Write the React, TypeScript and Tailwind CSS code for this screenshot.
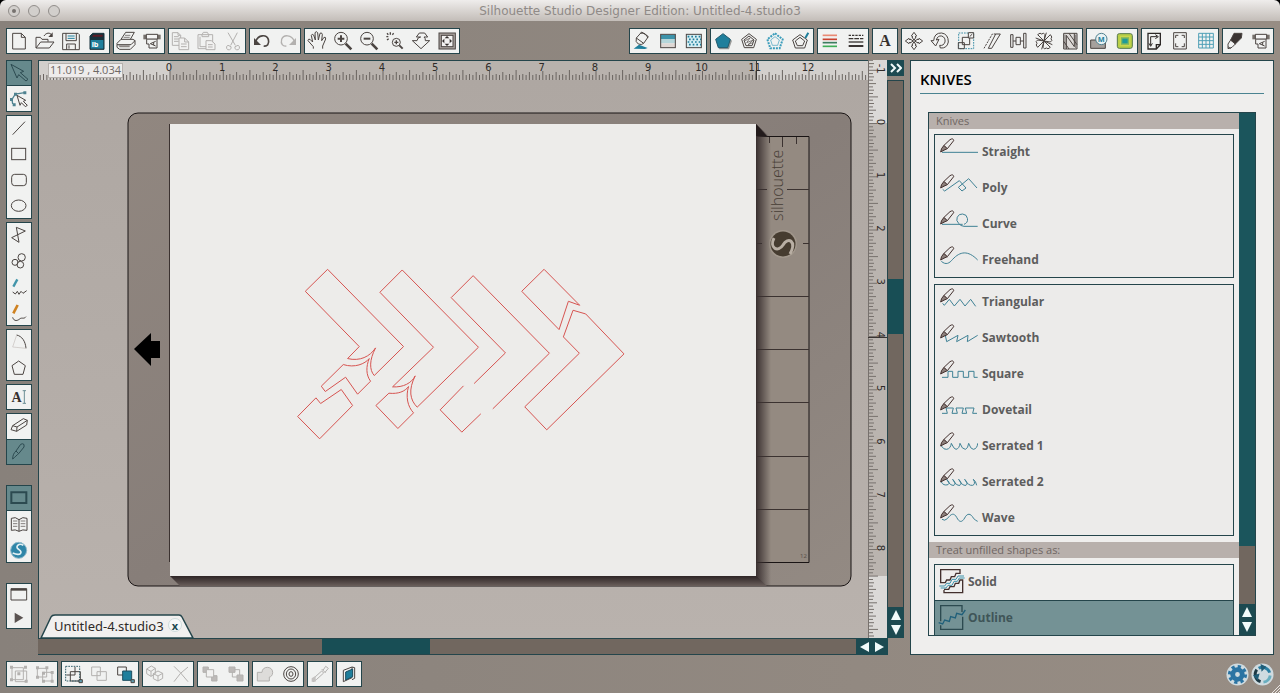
import { useState, type ReactNode } from "react";

const INK = "#4b4542";
const DIM = "#b3b1af";
const TEAL = "#1f7f9c";

// Every tool icon is drawn on a 78 x 78 grid
const icons: Record<string, ReactNode> = {
  novo: <path d="M20 16H46L58 28V63H20ZM46 16V28H58" />,
  open: (
    <>
      <path d="M12 60V28H25L30 34H48V41M12 60L26 42H66L52 60ZM36 24C42 14 54 12 60 22" />
      <path d="M62 13V27H49Z" fill={INK} stroke="none" />
    </>
  ),
  save: (
    <>
      <path d="M14 16H60L64 20V65H14ZM24 16V38H55V16M26 65V48H52V65M33 52V62" />
      <path d="M29 24H50M29 31H50" stroke={TEAL} />
    </>
  ),
  card: (
    <>
      <path d="M26 16H60V64H18V24Z" fill="#17333d" stroke="#17333d" />
      <path d="M20 36H58V62H20Z" fill={TEAL} stroke="none" />
      <path d="M28 20H56V26H24Z" fill="#5c1c26" stroke="none" />
      <text x="23" y="57" fontSize="22" fontWeight="700" fill="#fff" stroke="none">lb</text>
    </>
  ),
  print: (
    <>
      <path d="M24 34L38 13H64L52 34M12 46L24 34H60L66 38L54 50H12ZM12 50V58L20 64H52L66 50V38" />
      <path d="M36 22H52M32 28H50" strokeWidth="2" />
      <path d="M16 52H50V58H20Z" fill="#8b8683" stroke="none" />
    </>
  ),
  cutter: (
    <>
      <path d="M13 20H65V34H13Z" fill="#77716d" stroke="none" />
      <path d="M22 19H56V33H22Z" fill="#f4f4f4" />
      <path d="M23 34V48H30V60H54V34M50 40L34 47L50 54M44 43V51" />
    </>
  ),
  copy: (
    <>
      <path d="M13 14H30L38 22V52H13ZM30 14V22H38M18 26H32M18 33H32M18 40H32" />
      <path d="M33 30H50L62 42V65H33Z" fill="#f2f2f1" />
      <path d="M50 30V42H62M39 48H56M39 56H56" />
    </>
  ),
  paste: (
    <>
      <path d="M12 20H56V62H12ZM24 20L28 13H40L44 20V26H24ZM18 26V56H36" />
      <path d="M36 38H52L63 48V65H36Z" fill="#f2f2f1" />
      <path d="M42 50H56M42 57H56" />
    </>
  ),
  scissors: <path d="M24 14L46 52M52 14L32 52M24 52a7 7 0 1 0 9 4ZM54 52a7 7 0 1 1 -9 4Z" />,
  undo: (
    <>
      <path d="M20 40C28 20 52 18 58 34C62 48 54 56 44 54" strokeWidth="5" />
      <path d="M15 30V51H36Z" fill={INK} stroke="none" />
    </>
  ),
  redo: (
    <>
      <path d="M58 40C50 20 26 18 20 34C16 48 24 56 34 54" strokeWidth="4" />
      <path d="M63 30V51H42Z" fill={DIM} stroke="none" />
    </>
  ),
  hand: <path d="M28 62V56L12 38Q12 32 18 34L26 42L22 22Q24 16 29 21L34 36L33 14Q37 8 41 14L43 36L48 16Q53 12 55 19L53 38L60 28Q66 26 65 33L56 54V62" />,
  zoomIn: (
    <>
      <circle cx="33" cy="32" r="19" />
      <path d="M23 32H43M33 22V42" strokeWidth="6" />
      <path d="M47 47L64 64" strokeWidth="8" />
    </>
  ),
  zoomOut: (
    <>
      <circle cx="33" cy="32" r="19" />
      <path d="M23 32H43" strokeWidth="6" />
      <path d="M47 47L64 64" strokeWidth="8" />
    </>
  ),
  zoomArea: (
    <>
      <circle cx="43" cy="43" r="12" />
      <path d="M37 43H49M43 37V49" strokeWidth="4" />
      <path d="M52 52L62 62" strokeWidth="6" />
      <path d="M13 26H19M25 13V20M15 16L19 20M35 16L31 20M15 36L20 32" strokeWidth="4" />
    </>
  ),
  pan: <path d="M39 62L13 38H27Q28 28 38 27H25L34 15H50L59 27H48Q53 31 52 38H65Z" />,
  fit: (
    <>
      <rect x="15" y="15" width="49" height="48" fill="#a9a39e" />
      <rect x="22" y="22" width="35" height="34" fill="#f2f2f1" />
      <path d="M39 24L46 31H32ZM39 54L46 47H32ZM24 39L31 32V46ZM54 39L47 32V46Z" fill="#332e2c" stroke="none" />
    </>
  ),
  fill: (
    <>
      <path d="M22 30L38 12L58 26L44 46ZM22 30Q18 42 28 48Q38 52 44 46M34 16Q52 12 56 30" />
      <path d="M14 62L30 50L40 54L56 60L48 63Z" fill={TEAL} stroke="none" />
    </>
  ),
  gradient: (
    <>
      <path d="M17 20H61V34H17Z" fill="#3d93aa" stroke="none" />
      <path d="M17 34H61V46H17Z" fill="#b5d6da" stroke="none" />
      <path d="M17 46H61V58H17Z" fill="#dfd8d4" stroke="none" />
      <rect x="17" y="19" width="44" height="40" />
    </>
  ),
  pattern: (
    <>
      <rect x="16" y="19" width="45" height="40" fill="#d6edf2" />
      <path d="M20 26H60M24 34H60M20 42H60M24 50H60" stroke={TEAL} strokeWidth="5" strokeDasharray="5 6" />
    </>
  ),
  penta: (
    <>
      <path d="M42 20L66 38L57 64H28L20 40Z" fill="#9a9a98" stroke="none" />
      <path d="M39 17L61 34L53 59H25L17 34Z" fill={TEAL} stroke="#215a6c" />
    </>
  ),
  pentaSketch: (
    <>
      <path d="M39 17L61 34L53 59H25L17 34ZM39 24L54 36L48 53H30L24 36Z" />
      <path d="M27 38L42 30L32 44L52 36L36 50L50 44" strokeWidth="2" />
    </>
  ),
  pentaDots: (
    <g stroke="#3b9dbb">
      <path d="M39 16L62 34L53 61H25L16 34Z" strokeDasharray="6 3" strokeWidth="6" />
      <path d="M39 26L52 36L47 52H31L26 36Z" strokeWidth="2" />
    </g>
  ),
  pentaPen: (
    <>
      <path d="M36 20L58 36L50 60H22L14 36ZM36 28L50 39L44 53H28L22 39Z" />
      <path d="M52 30L61 14" stroke={TEAL} strokeWidth="6" />
    </>
  ),
  colors: (
    <g strokeWidth="5">
      <path d="M17 22H60" stroke="#e98a74" />
      <path d="M17 34H60" stroke="#c9412e" />
      <path d="M17 44H60" stroke="#3d7d5f" />
      <path d="M17 55H60" stroke="#3fae57" />
    </g>
  ),
  lineStyle: (
    <g stroke="#3a3533">
      <path d="M17 22H61" strokeDasharray="7 3" strokeWidth="4" />
      <path d="M17 32H61" strokeDasharray="14 3" strokeWidth="4" />
      <path d="M17 42H61" strokeWidth="4" />
      <path d="M17 54H61" strokeWidth="6" />
    </g>
  ),
  text: (
    <text x="39" y="54" textAnchor="middle" fontSize="48" fontWeight="700" fill="#37302e" stroke="none" fontFamily="Liberation Serif, serif">A</text>
  ),
  move: <path d="M39 37L33 27H36L31 24L39 13L47 24L42 27H45ZM39 41L33 51H36L31 54L39 65L47 54L42 51H45ZM37 39L27 33V36L24 31L13 39L24 47L27 42V45ZM41 39L51 33V36L54 31L65 39L54 47L51 42V45Z" />,
  rotate: <path d="M12 38L26 54L36 34L28 36Q32 22 44 24Q56 28 54 42Q50 54 38 52L40 60Q60 62 64 42Q64 18 44 15Q22 14 20 38Z" />,
  scale: (
    <>
      <path d="M17 15H62V62H17Z" stroke="#3e90a8" strokeDasharray="5 3" />
      <path d="M28 28H50V50H28ZM16 44H34V62H16Z" />
      <path d="M46 14H62V30H46Z" fill="#f2f2f1" />
      <path d="M50 26L58 18" />
    </>
  ),
  shear: (
    <>
      <path d="M28 61L50 18H64L38 61Z" />
      <path d="M15 61L40 18H50" strokeDasharray="6 3" />
    </>
  ),
  align: <path d="M17 20H24V58H17ZM56 16H63V60H56ZM33 28H46V50H33ZM24 39H33M46 39H56" />,
  replicate: (
    <>
      <path d="M39 39L20 20Q28 12 32 18Q38 12 42 20ZM39 39L58 20Q66 28 60 32Q66 38 58 42ZM39 39L58 58Q50 66 46 60Q40 66 36 58ZM39 39L20 58Q12 50 18 46Q12 40 20 36Z" />
      <path d="M39 39L46 14M39 39L14 30M39 39L32 64M39 39L64 50" />
    </>
  ),
  nest: (
    <>
      <path d="M20 16H60V63H20Z" fill="#dedbd9" />
      <path d="M28 63V22L52 56V16M36 16L60 50M20 40L36 63" />
      <path d="M24 20V60M56 20V60" strokeWidth="2" />
    </>
  ),
  modify: (
    <>
      <path d="M14 36H58V61H14Z" fill="#a6a19d" />
      <circle cx="46" cy="33" r="17" fill="#e8f2f4" stroke="#50808e" />
      <text x="46" y="41" textAnchor="middle" fontSize="22" fontWeight="700" fill={TEAL} stroke="none">M</text>
    </>
  ),
  trace: (
    <>
      <rect x="16" y="17" width="45" height="44" rx="6" fill="#b9cf48" stroke="#55774a" />
      <rect x="25" y="26" width="28" height="26" fill="#7fb860" stroke="#d3d94c" />
      <rect x="31" y="32" width="16" height="14" fill="#1f9a98" stroke="none" />
    </>
  ),
  pageSetup: (
    <>
      <path d="M21 16H58V50L46 63H21ZM58 50H46V63" strokeWidth="4" stroke="#2c2827" />
      <path d="M29 52V26H48M24 46L29 55L34 46M43 20L52 26L43 32" strokeWidth="3" stroke="#2c2827" />
    </>
  ),
  regMarks: (
    <>
      <path d="M20 14H58V63H20Z" />
      <path d="M26 30V22H34M44 22H52V30M52 46V56H44M34 56H26V46" />
    </>
  ),
  grid: (
    <g stroke="#4e9fb6">
      <path d="M17 16H61V60H17ZM28 16V60M39 16V60M50 16V60M17 27H61M17 38H61M17 49H61" />
    </g>
  ),
  marker: (
    <>
      <path d="M36 16H60L58 30L40 48L26 36Z" fill="#3a3432" />
      <path d="M26 36L40 48L30 58L18 62V48ZM18 56L26 62" />
    </>
  ),
  select: <path d="M15 13L53 34L43 38L66 58L60 63L38 44L33 54Z" />,
  editPoints: (
    <>
      <path d="M20 54L18 40L28 24L56 20" stroke="#4e8290" strokeWidth="4" />
      <path d="M12 36h9v9h-9zM24 20h9v9h-9zM52 16h9v9h-9zM20 52h9v9h-9z" fill="#4e8290" stroke="none" />
      <path d="M33 28L59 43L52 46L64 58L58 62L46 50L42 58Z" fill="#f2f2f1" />
    </>
  ),
  line: <path d="M20 59L57 20" />,
  rect: <rect x="17" y="22" width="42" height="34" />,
  rounded: <rect x="17" y="22" width="44" height="34" rx="9" />,
  ellipse: <ellipse cx="38" cy="38" rx="22" ry="17" />,
  polygonTool: <path d="M31 16L58 27L17 47L39 61Z" />,
  curveTool: (
    <>
      <circle cx="27" cy="43" r="9" />
      <circle cx="47" cy="28" r="11" />
      <circle cx="43" cy="50" r="10" />
    </>
  ),
  freehand: (
    <>
      <path d="M22 38L34 16" stroke="#4295aa" strokeWidth="7" />
      <path d="M20 54L28 60L34 52L39 61L45 52L51 58L62 50" />
    </>
  ),
  smooth: (
    <>
      <path d="M22 40L35 15" stroke="#cf8221" strokeWidth="8" />
      <path d="M20 52C24 66 36 62 42 56C48 52 54 58 60 50" />
    </>
  ),
  arc: (
    <>
      <path d="M32 18C48 22 58 36 60 58" />
      <path d="M32 18L20 54L60 58" stroke="#c5bfbc" strokeWidth="2" />
    </>
  ),
  pentagonTool: <path d="M38 18L58 32L51 58H25L18 32Z" />,
  textTool: (
    <>
      <text x="32" y="53" textAnchor="middle" fontSize="42" fontWeight="700" fill="#37302e" stroke="none" fontFamily="Liberation Serif, serif">A</text>
      <path d="M50 20H60M55 20V58M50 58H60" stroke="#6c8f95" />
    </>
  ),
  eraser: <path d="M15 50L20 38L52 17L64 22L62 36L32 55ZM20 38L33 42L64 22M33 42L32 55" />,
  knife: <path d="M20 60C20 48 24 42 30 36L44 16Q56 10 54 24L38 44C32 48 28 54 20 60ZM30 36L38 44" />,
  frame: <path d="M16 22H61V54H16Z" strokeWidth="6" />,
  book: (
    <>
      <path d="M39 26Q28 16 16 22V58Q28 54 39 61Q50 54 63 58V22Q50 16 39 26V61" />
      <path d="M21 30H34M21 38H34M21 46H34M44 30H58M44 38H58M44 46H58" strokeWidth="2" />
    </>
  ),
  store: (
    <>
      <circle cx="38" cy="40" r="24" fill="#2f86a8" stroke="#8fb9c9" />
      <path d="M52 25C38 16 26 30 38 37C52 46 44 58 20 48" stroke="#e4f1f4" strokeWidth="5" />
    </>
  ),
  panel: (
    <>
      <path d="M15 20H62V54H15Z" />
      <path d="M15 23H62" strokeWidth="6" />
    </>
  ),
  play: <path d="M26 23L52 38L26 54Z" fill="#5b5452" stroke="none" />,
  group: (
    <>
      <path d="M18 20H52V56H18ZM28 30H62V62H28Z" />
      <path d="M12 14h9v9h-9zM54 14h9v9h-9zM12 52h9v9h-9zM56 56h9v9h-9zM34 34h9v9h-9z" fill={DIM} stroke="none" />
    </>
  ),
  ungroup: (
    <>
      <path d="M16 22H44V48H16ZM32 34H60V60H32Z" />
      <path d="M12 16h9v9h-9zM40 16h9v9h-9zM12 44h9v9h-9zM56 30h9v9h-9zM30 56h9v9h-9zM56 56h9v9h-9zM30 32h9v9h-9z" fill={DIM} stroke="none" />
    </>
  ),
  selectAll: (
    <>
      <path d="M28 32H58V60H28ZM16 42H42V18" />
      <path d="M14 16H56V60H14Z" strokeDasharray="5 3" stroke="#35616b" />
      <path d="M54 56h10v9h-10z" fill="#5fa0b2" />
    </>
  ),
  deselect: <path d="M14 18H40V44H14ZM30 32H58V58H30Z" />,
  selectColor: (
    <>
      <path d="M14 18H40V42H14Z" />
      <path d="M29 30H56V58H29Z" fill={TEAL} stroke="#1d4f61" />
      <path d="M54 56h10v9h-10z" fill="#5fa0b2" />
    </>
  ),
  cubes: <path d="M14 24L28 15L40 22V38L27 46L14 38ZM14 24L27 31L40 22M27 31V46M34 38L48 30L62 37V52L48 60L34 53ZM34 38L48 45L62 37M48 45V60" />,
  remove: <path d="M18 16Q36 32 60 62M60 18Q36 34 18 62" />,
  forward: (
    <>
      <path d="M18 18H34V34H18ZM44 44H60V60H44Z" fill="#bdbab8" />
      <path d="M28 26H50V48H28Z" fill="#f2f2f1" />
    </>
  ),
  backward: (
    <>
      <path d="M28 26H50V48H28Z" fill="#f2f2f1" />
      <path d="M18 18H36V34H18ZM42 42H60V60H42Z" fill="#bdbab8" />
    </>
  ),
  weld: <path d="M16 34H30C30 14 62 14 62 34C62 44 56 48 52 48V60H16Z" fill="#dddcda" />,
  offset: (
    <>
      <circle cx="39" cy="39" r="22" />
      <ellipse cx="39" cy="39" rx="14" ry="15" />
      <ellipse cx="39" cy="39" rx="6" ry="7" />
    </>
  ),
  picker: (
    <>
      <path d="M18 62L22 50L44 30L50 36L28 56ZM44 24L56 36M48 28L56 16L64 22L54 34" />
      <path d="M14 52L26 44V62H14Z" fill="#c4c2c0" stroke="none" />
    </>
  ),
  layers: (
    <>
      <path d="M22 28L48 18V50L22 62ZM48 18L56 20V52L48 56" />
      <path d="M29 33L50 24V47L29 57Z" fill={TEAL} stroke="#1d4f61" />
    </>
  ),
};

const topLeft: string[][] = [
  ["novo", "open", "save", "card"],
  ["print", "cutter"],
  ["copy", "paste", "scissors"],
  ["undo", "redo"],
  ["hand", "zoomIn", "zoomOut", "zoomArea", "pan", "fit"],
];

const topRight: string[][] = [
  ["fill", "gradient", "pattern"],
  ["penta", "pentaSketch", "pentaDots", "pentaPen"],
  ["colors", "lineStyle"],
  ["text"],
  ["move", "rotate", "scale", "shear", "align", "replicate", "nest"],
  ["modify", "trace"],
  ["pageSetup", "regMarks", "grid"],
  ["marker", "cutter"],
];

const tools: string[][] = [
  ["select", "editPoints"],
  ["line", "rect", "rounded", "ellipse"],
  ["polygonTool", "curveTool", "freehand", "smooth"],
  ["arc", "pentagonTool"],
  ["textTool"],
  ["eraser", "knife"],
];

const bottom: string[][] = [
  ["group", "ungroup"],
  ["selectAll", "deselect", "selectColor"],
  ["cubes", "remove"],
  ["forward", "backward"],
  ["weld", "offset"],
  ["picker"],
  ["layers"],
];

const disabled = [
  "copy", "paste", "scissors", "redo", "group", "ungroup", "deselect",
  "cubes", "remove", "forward", "backward", "weld", "picker",
];
const active = ["select", "knife", "frame"];

function Tool({ name, short }: { name: string; short?: boolean }) {
  const on = active.includes(name);
  return (
    <button
      type="button"
      aria-label={name}
      aria-pressed={on}
      className={`flex w-[26px] shrink-0 items-center justify-center ${short ? "h-[23px]" : "h-[26px]"} ${
        on ? "bg-[#66898c] ring-1 ring-inset ring-[#24454b]" : ""
      }`}
    >
      <svg
        viewBox="0 0 78 78"
        className="size-[26px] shrink-0"
        fill="none"
        stroke={disabled.includes(name) ? DIM : on ? "#2c4a50" : INK}
        strokeWidth="3"
      >
        {icons[name]}
      </svg>
    </button>
  );
}

function ToolGroup({ names, vertical, short }: { names: string[]; vertical?: boolean; short?: boolean }) {
  return (
    <div className={`flex bg-[#f1f2f1] ring-1 ring-inset ring-[#24454b] ${vertical ? "flex-col" : ""}`}>
      {names.map((n) => (
        <Tool key={n} name={n} short={short} />
      ))}
    </div>
  );
}

function Arrows({ horizontal }: { horizontal?: boolean }) {
  return (
    <div className={`flex shrink-0 bg-[#1c4a51] ${horizontal ? "h-full w-8" : "h-[31px] w-full flex-col"}`}>
      <button type="button" aria-label="Scroll back" className="flex flex-1 items-center justify-center">
        <svg viewBox="0 0 12 12" className="size-3" fill="#f1fbfb">
          <path d={horizontal ? "M11 1V11L2 6Z" : "M6 1L11 11H1Z"} />
        </svg>
      </button>
      <button type="button" aria-label="Scroll forward" className="flex flex-1 items-center justify-center">
        <svg viewBox="0 0 12 12" className="size-3" fill="#f1fbfb">
          <path d={horizontal ? "M1 1V11L10 6Z" : "M1 1H11L6 11Z"} />
        </svg>
      </button>
    </div>
  );
}

const INCH = 53.25;

// Sixteenths of an inch, starting two and a half inches before the origin
function ticks(origin: number, base: number, dir: 1 | -1, vertical?: boolean) {
  let d = "";
  for (let i = -40; i < 320; i++) {
    const p = (origin + (i * INCH) / 16).toFixed(1);
    const len = i % 16 === 0 ? 9 : i % 8 === 0 ? 10 : i % 4 === 0 ? 8 : i % 2 === 0 ? 6 : 5;
    d += vertical ? `M${base} ${p}h${len * dir}` : `M${p} ${base}v${len * dir}`;
  }
  return d;
}

function TopRuler() {
  return (
    <div className="relative h-5 shrink-0 border-t border-[#24454b] bg-[#d2cfcc]">
      <svg className="block h-full w-full font-['DejaVu_Sans',sans-serif]">
        <rect x="131" width="587" height="20" fill="#b8b2ad" />
        <path d={ticks(131, 19, -1)} stroke="#6a6460" strokeWidth="1" />
        {Array.from({ length: 13 }, (_, i) => (
          <text key={i} x={130 + i * INCH} y="10" fontSize="10" textAnchor="middle" fill="#2e2a28">
            {i}
          </text>
        ))}
        <path d="M717.5 0V19" stroke="#3a3533" />
      </svg>
      <div className="absolute top-0.5 left-[9px] flex h-[15px] w-[75px] items-center justify-center border border-[#b5b1ad] bg-[#eeeceb] font-['Open_Sans',sans-serif] text-[11px] text-[#6d6865]">
        11.019 , 4.034
      </div>
    </div>
  );
}

function SideRuler() {
  return (
    <svg className="block h-full w-[19px] shrink-0 bg-[#dbd9d7] font-['DejaVu_Sans',sans-serif]">
      <rect y="63" width="19" height="453" fill="#bab4af" />
      <path d="M0.5 0V2000" stroke="#77716d" />
      <path d={ticks(63.5, 0, 1, true)} stroke="#77716d" strokeWidth="1" />
      <path d="M0 277.5H19" stroke="#3a3533" />
      {Array.from({ length: 10 }, (_, i) => (
        <text
          key={i}
          transform={`translate(9 ${62 + (i - 1) * INCH}) rotate(90)`}
          fontSize="10"
          textAnchor="middle"
          fill="#2e2a28"
        >
          {i - 1}
        </text>
      ))}
    </svg>
  );
}

function Drawing() {
  return (
    <svg className="block h-full w-full">
      <defs>
        <linearGradient id="mat" x1="0" y1="0" x2="1" y2="1">
          <stop offset="0" stopColor="#918780" />
          <stop offset="0.5" stopColor="#877e79" />
          <stop offset="1" stopColor="#938a83" />
        </linearGradient>
        <linearGradient id="shadeX">
          <stop offset="0" stopColor="#3a3030" />
          <stop offset="1" stopColor="#3a3030" stopOpacity="0" />
        </linearGradient>
        <linearGradient id="shadeY" x1="0" y1="0" x2="0" y2="1">
          <stop offset="0" stopColor="#2e2526" />
          <stop offset="1" stopColor="#6a5f5b" />
        </linearGradient>
      </defs>

      {/* Cutting mat */}
      <g transform="translate(-39 -80)">
        <rect x="128" y="113" width="723" height="473" rx="10" fill="url(#mat)" stroke="#191414" strokeWidth="1" />
        <path d="M809 136.500V562.500H756V136.500Z" fill="#948a81" stroke="#191414" strokeWidth="1" />
        <path
          d="M757 189.500H767M787 189.500H809M757 243.500H762M803 243.500H809M757 296.500H809M757 349.500H809M757 402.500H809M757 456.500H809M757 509.500H809M769.500 137V143M782.500 137V147M796.500 137V144"
          stroke="#3b3230"
        />
        <text
          transform="translate(783 221) rotate(-90)"
          fontSize="16"
          fontWeight="300"
          fill="#463d35"
          className="font-['Open_Sans',sans-serif]"
        >
          silhouette
        </text>
        <circle cx="783" cy="244" r="14" fill="#a1978c" />
        <circle cx="783" cy="244" r="12.500" fill="#463c30" />
        <path d="M774 238C769 248 778 253 783 245C788 236 797 241 790 254" fill="none" stroke="#b9afa4" strokeWidth="3" />
        <text x="800" y="558" fontSize="6" fill="#5b524c">12</text>

        {/* Page and its shadow */}
        <path d="M756 124L771 138V586H756Z" fill="url(#shadeX)" />
        <path d="M756 124L767 136H756Z" fill="#231b1c" />
        <path d="M170 576L180 586H767L756 576Z" fill="url(#shadeY)" />
        <rect x="170" y="124" width="586" height="452" fill="#edecea" />
        <path d="M169.500 124V562" stroke="#3b3230" />
        <path d="M134 349L151 333V341H160V358H151V366Z" fill="#000" />

        {/* Cut shapes */}
        <g transform="translate(280 250) scale(0.333)" fill="none" stroke="#d65350" strokeWidth="3">
          <path d="M238 290L76 124L143 58L371 290L283 377C268 360 268 330 287 294C270 320 240 335 203 326Z" />
          <path d="M190 344C225 355 255 342 268 326C258 350 258 375 272 394L233 433L197 382L136 425L124 409Z" />
          <path d="M108 444L53 500L119 567L218 467L184 419L122 461Z" />
          <path d="M461 292L300 127L367 60L596 292L412 472C390 450 385 420 406 378C395 400 370 413 338 411Z" />
          <path d="M327 430C355 433 375 425 386 410C377 440 383 470 401 489L354 536L288 467Z" />
          <path d="M583 401L677 309L514 143L580 77L809 310L639 477M551 408L481 480L546 547L603 492" />
          <path d="M900 166L793 58L726 124L838 239L866 154Z" />
          <path d="M880 181L918 192L1033 312L801 540L735 471L899 310L851 261Z" />
        </g>
      </g>
    </svg>
  );
}

function Workspace() {
  return (
    <main className="flex min-w-0 flex-1 flex-col">
      <div className="flex min-h-0 flex-1">
        <div className="flex min-w-0 flex-1 flex-col border-l border-[#24454b]">
          <TopRuler />
          <div className="relative min-h-0 flex-1 bg-linear-to-b from-[#aea7a2] to-[#b9b2ad]">
            <Drawing />
            <div className="absolute bottom-0 left-px flex h-6 w-[154px] items-center">
              <svg viewBox="0 0 154 24" className="absolute inset-0 size-full">
                <path d="M1 24L11 3Q12 1 15 1H139Q141 1 142 3L153 24Z" fill="#f1f0ef" stroke="#24454b" strokeWidth="1.500" />
              </svg>
              <span className="relative pl-3.5 font-['Noto_Sans',sans-serif] text-[13px] leading-5 text-[#2e2a28]">
                Untitled-4.studio3
              </span>
              <button
                type="button"
                aria-label="Close tab"
                className="absolute top-1 right-3 flex size-3.5 items-center justify-center rounded-full border border-[#cfdcdc] bg-[#f6f8f8] font-['Open_Sans',sans-serif] text-[11px] leading-none font-bold text-[#1c4a51]"
              >
                x
              </button>
            </div>
          </div>
        </div>
        <SideRuler />
        <div className="flex w-[17px] shrink-0 flex-col">
          <button
            type="button"
            aria-label="Expand"
            className="flex h-4 items-center justify-center bg-[#1c4a51]"
          >
            <svg viewBox="0 0 12 12" className="size-3" fill="none" stroke="#f1fbfb" strokeWidth="2">
              <path d="M1 2L5 6L1 10M7 2L11 6L7 10" />
            </svg>
          </button>
          <div className="mt-1 flex min-h-0 flex-1 flex-col border-x border-t border-[#24454b] bg-[#71675f]">
            <div className="flex-[198]" />
            <div className="flex-[55] bg-[#184e55]" />
            <div className="flex-[274]" />
          </div>
          <Arrows />
        </div>
      </div>
      <div className="mr-4 flex h-[17px] shrink-0">
        <div className="flex min-w-0 flex-1 border-y border-[#24454b] bg-[#71675f]">
          <div className="flex-[284]" />
          <div className="flex-[108] bg-[#184e55]" />
          <div className="flex-[426]" />
        </div>
        <Arrows horizontal />
      </div>
    </main>
  );
}

type Knife = { nome: string; path: string };

const simpleKnives: Knife[] = [
  { nome: "Straight", path: "M6 43H114" },
  { nome: "Poly", path: "M8 46L14 51L58 20L78 42L66 51L55 40L86 14L111 42" },
  { nome: "Curve", path: "M6 43H68M68 12a16 16 0 0 0 -12 28Q60 48 72 49H113M68 12a16 16 0 0 1 4 31" },
  { nome: "Freehand", path: "M4 46C18 58 28 52 38 40C60 16 84 12 113 42" },
];

const patternKnives: Knife[] = [
  { nome: "Triangular", path: "M8 46L13 52L28 34L43 54L60 34L75 54L92 34L107 55" },
  { nome: "Sawtooth", path: "M16 34L20 53L54 34L50 53L84 34L82 53L113 34" },
  { nome: "Square", path: "M6 52H24V34H38V52H54V34H70V52H86V34H102V52H113" },
  { nome: "Dovetail", path: "M6 52H22L18 36H40L36 52H52L48 36H70L66 52H80L76 36H102L98 52H111" },
  { nome: "Serrated 1", path: "M4 42Q12 54 20 52Q32 50 34 34Q42 52 48 52Q58 50 60 34Q66 52 76 52Q84 50 86 34Q92 52 100 52Q112 50 113 34" },
  { nome: "Serrated 2", path: "M4 42Q10 54 24 50Q32 44 20 34Q30 54 42 52Q50 46 38 34Q48 54 60 52Q68 46 56 34Q66 54 78 52Q86 46 74 34Q84 54 98 52Q108 48 100 34Q108 40 110 52" },
  { nome: "Wave", path: "M6 46Q14 52 22 44C34 28 42 26 50 40C58 56 66 56 74 42C82 26 92 28 100 42Q106 50 113 52" },
];

function KnifeList({ items }: { items: Knife[] }) {
  return (
    <ul className="bg-[#ecebea] ring-1 ring-inset ring-[#24454b]">
      {items.map((k) => (
        <li key={k.nome}>
          <button type="button" className="flex h-9 w-full items-center gap-1 pl-1.5 text-left">
            <svg viewBox="0 0 114 84" className="h-7 w-[38px] shrink-0" fill="none">
              <path d={k.path} stroke="#3f8195" strokeWidth="3" />
              <path d="M2 42Q2 32 12 22L22 32Q12 36 2 42Z" fill="#8d807c" stroke="#43302e" strokeWidth="3" />
              <path d="M12 22L30 5Q40 -1 41 8L22 32Z" fill="#ecebea" stroke="#43302e" strokeWidth="3" />
            </svg>
            <span>{k.nome}</span>
          </button>
        </li>
      ))}
    </ul>
  );
}

function SectionTitle({ children }: { children: ReactNode }) {
  return (
    <h3 className="h-4 shrink-0 bg-[#b8b0ac] pl-[7px] text-[11px] leading-4 font-normal text-[#6f6663]">
      {children}
    </h3>
  );
}

function KnivesPanel() {
  const [modo, setModo] = useState<string>("Outline");

  return (
    <aside className="flex w-[364px] shrink-0 flex-col border border-[#24454b] bg-[#efeeed] px-[9px] pt-2 pb-[18px] font-['Open_Sans',sans-serif]">
      <h2 className="border-b border-[#4a8391] pb-1 text-[15px] leading-5 font-semibold text-black">
        KNIVES
      </h2>
      <div className="mt-[18px] mr-2 ml-2 flex min-h-0 flex-1 border border-[#24454b]">
        <div className="flex min-w-0 flex-1 flex-col overflow-hidden text-[12px] font-bold text-[#5d5d5d]">
          <SectionTitle>Knives</SectionTitle>
          <div className="flex shrink-0 flex-col gap-1.5 px-[5px] pt-[5px] pb-1.5">
            <KnifeList items={simpleKnives} />
            <KnifeList items={patternKnives} />
          </div>
          <SectionTitle>Treat unfilled shapes as:</SectionTitle>
          <div className="mx-[5px] mt-1.5 shrink-0 ring-1 ring-inset ring-[#24454b]">
            {["Solid", "Outline"].map((m) => (
              <button
                key={m}
                type="button"
                aria-pressed={modo === m}
                onClick={() => setModo(m)}
                className={`flex h-9 w-full items-center gap-0.5 pl-1 text-left ${
                  modo === m ? "bg-[#749295] text-[#3f5558] ring-1 ring-inset ring-[#24454b]" : ""
                }`}
              >
                <svg viewBox="0 0 84 84" className="size-7 shrink-0" fill="none" strokeWidth="4">
                  {m === "Solid" ? (
                    <>
                      <path d="M66 18V5H8V44H22L26 36H36L40 26H50L54 16H66M18 66V74H74V36H66L62 46H52L48 56H36L32 64H18" stroke="#43302e" />
                      <path d="M4 54H20L26 46H36L42 34H54L60 24H78M8 60H24L30 52H42L48 40H58L64 30H80" stroke="#3c93ab" strokeWidth="3" />
                    </>
                  ) : (
                    <>
                      <path d="M8 52V5H72V24M74 38V76H8V64" stroke="#2c4a50" />
                      <path d="M2 56L14 60L20 48L34 52L38 38L52 42L56 28L72 32L82 18" stroke="#20607a" />
                    </>
                  )}
                </svg>
                <span>{m}</span>
              </button>
            ))}
          </div>
        </div>
        <div className="flex w-4 shrink-0 flex-col bg-[#71675f]">
          <div className="flex-[434] bg-[#1b555c]" />
          <div className="flex-[58]" />
          <Arrows />
        </div>
      </div>
    </aside>
  );
}

function App() {
  return (
    <div className="flex h-screen w-full flex-col overflow-hidden bg-linear-to-r from-[#88817b] to-[#978d84]">
      <div className="bg-black">
        <header className="flex h-[21px] items-center rounded-t-md bg-linear-to-b from-[#efedec] to-[#c3bdb8] px-2">
          <div className="flex flex-1 gap-2">
            {["Close", "Minimize", "Zoom"].map((b) => (
              <button
                key={b}
                type="button"
                aria-label={b}
                className="flex size-3 items-center justify-center rounded-full border border-[#928e8b] bg-[#d2cfcc]"
              >
                {b === "Close" && <span className="size-1 rounded-full bg-[#77726f]" />}
              </button>
            ))}
          </div>
          <h1 className="font-['DejaVu_Sans',sans-serif] text-[12px] text-[#8f8a87]">
            Silhouette Studio Designer Edition: Untitled-4.studio3
          </h1>
          <div className="flex-1" />
        </header>
      </div>

      <div className="flex justify-between px-1.5 pt-[7px] pb-1.5">
        <div className="flex gap-[3px]">
          {topLeft.map((g) => (
            <ToolGroup key={g[0]} names={g} />
          ))}
        </div>
        <div className="flex gap-[3px]">
          {topRight.map((g) => (
            <ToolGroup key={g[0]} names={g} />
          ))}
        </div>
      </div>

      <div className="flex min-h-0 flex-1 gap-1.5 px-1.5">
        <nav className="flex shrink-0 flex-col gap-5">
          <div className="flex flex-col gap-[3px]">
            {tools.map((g) => (
              <ToolGroup key={g[0]} names={g} vertical />
            ))}
          </div>
          <ToolGroup names={["frame", "book", "store"]} vertical />
          <ToolGroup names={["panel", "play"]} vertical short />
        </nav>
        <Workspace />
        <KnivesPanel />
      </div>

      <footer className="relative flex items-center justify-between p-1.5">
        <div className="flex gap-[3px]">
          {bottom.map((g) => (
            <ToolGroup key={g[0]} names={g} />
          ))}
        </div>
        <div className="flex gap-0.5">
          <button type="button" aria-label="Preferences">
            <svg viewBox="0 0 24 24" className="size-[23px]">
              <circle cx="12" cy="12" r="11.500" fill="#cfdbe0" />
              <circle cx="12" cy="12" r="8" fill="none" stroke="#2b74a3" strokeWidth="4" strokeDasharray="3.200 3.080" />
              <circle cx="12" cy="12" r="5" fill="none" stroke="#2b74a3" strokeWidth="5" />
            </svg>
          </button>
          <button type="button" aria-label="Sync">
            <svg viewBox="0 0 24 24" className="size-[23px]" fill="none" strokeWidth="3">
              <circle cx="12" cy="12" r="11.500" fill="#cfdbe0" />
              <path d="M10 19.500A8 8 0 0 1 6 7" stroke="#1d3945" />
              <path d="M8 5.500A8 8 0 0 1 19.500 10" stroke="#2b7fa3" />
              <path d="M20 13A8 8 0 0 1 13 20" stroke="#69aebf" />
              <path d="M10 1L16 4L11 9ZM2 13L9 11L7 18Z" fill="#1f5d78" />
            </svg>
          </button>
        </div>
        <svg viewBox="0 0 8 8" className="absolute right-0 bottom-0 size-2" stroke="#e8e4e1">
          <path d="M0 8L8 0M3 8L8 3M6 8L8 6" />
        </svg>
      </footer>
    </div>
  );
}

export default App;
